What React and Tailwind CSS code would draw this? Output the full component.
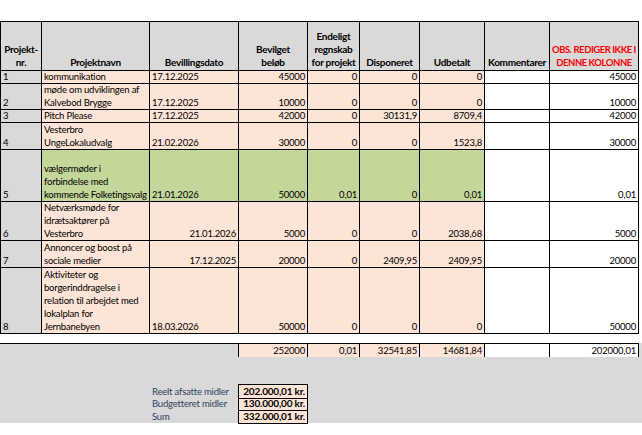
const COLS = "grid-cols-[40px_107px_88px_68px_51px_59px_64px_64px_88px]";

const rows = [
  { nr: "1", name: ["kommunikation"], date: "17.12.2025", bev: "45000", end: "0", disp: "0", udb: "0", obs: "45000" },
  { nr: "2", name: ["møde om udviklingen af", "Kalvebod Brygge"], date: "17.12.2025", bev: "10000", end: "0", disp: "0", udb: "0", obs: "10000" },
  { nr: "3", name: ["Pitch Please"], date: "17.12.2025", bev: "42000", end: "0", disp: "30131,9", udb: "8709,4", obs: "42000" },
  { nr: "4", name: ["Vesterbro", "UngeLokaludvalg"], date: "21.02.2026", bev: "30000", end: "0", disp: "0", udb: "1523,8", obs: "30000" },
  { nr: "5", name: ["vælgermøder i", "forbindelse med", "kommende Folketingsvalg"], date: "21.01.2026", bev: "50000", end: "0,01", disp: "0", udb: "0,01", obs: "0,01", green: true },
  { nr: "6", name: ["Netværksmøde for", "idrætsaktører på", "Vesterbro"], date: "21.01.2026", dateRight: true, bev: "5000", end: "0", disp: "0", udb: "2038,68", obs: "5000" },
  { nr: "7", name: ["Annoncer og boost på", "sociale medier"], date: "17.12.2025", dateRight: true, bev: "20000", end: "0", disp: "2409,95", udb: "2409,95", obs: "20000" },
  { nr: "8", name: ["Aktiviteter og", "borgerinddragelse i", "relation til arbejdet med", "lokalplan for", "Jernbanebyen"], date: "18.03.2026", bev: "50000", end: "0", disp: "0", udb: "0", obs: "50000" },
];

const Cell = ({ bg, right, center, children, className = "" }) => (
  <div
    className={`flex flex-col justify-end px-[2px] leading-[13px] whitespace-nowrap ${bg} ${
      right ? "text-right" : center ? "text-center" : "text-left"
    } ${className}`}
  >
    {children}
  </div>
);

const Head = ({ children, className = "text-[10px] tracking-[-0.3px]" }) => (
  <Cell bg="bg-[#d9d9d9]" center className={`font-bold pb-[1px] px-0 ${className}`}>
    {children}
  </Cell>
);

export default function App() {
  return (
    <div className="w-[642px] h-[435px] bg-white text-black text-[9.5px] tracking-[-0.2px] font-[Lato,'Liberation_Sans',sans-serif] overflow-hidden">
      {/* Main table */}
      <div
        className={`mt-[21px] grid ${COLS} grid-rows-[48px_12px_25px_12px_26px_51px_38px_26px_65px] gap-px p-px bg-black w-[639px]`}
      >
        {/* Header */}
        <Head>
          <div>Projekt-</div>
          <div>nr.</div>
        </Head>
        <Head>Projektnavn</Head>
        <Head>Bevillingsdato</Head>
        <Head>
          <div>Bevilget</div>
          <div>beløb</div>
        </Head>
        <Head>
          <div>Endeligt</div>
          <div>regnskab</div>
          <div>for projekt</div>
        </Head>
        <Head>Disponeret</Head>
        <Head>Udbetalt</Head>
        <Head>Kommentarer</Head>
        <Head className="text-[#ff0000] text-[9.5px] tracking-[-0.45px]">
          <div>OBS. REDIGER IKKE I</div>
          <div>DENNE KOLONNE</div>
        </Head>

        {/* Data rows */}
        {rows.map((r) => {
          const fill = r.green ? "bg-[#c4d79b]" : "bg-[#fce4d6]";
          return [
            <Cell key={r.nr + "a"} bg="bg-[#d9d9d9]">{r.nr}</Cell>,
            <Cell key={r.nr + "b"} bg={fill}>
              {r.name.map((line) => (
                <div key={line}>{line}</div>
              ))}
            </Cell>,
            <Cell key={r.nr + "c"} bg={fill} right={r.dateRight}>{r.date}</Cell>,
            <Cell key={r.nr + "d"} bg={fill} right>{r.bev}</Cell>,
            <Cell key={r.nr + "e"} bg={fill} right>{r.end}</Cell>,
            <Cell key={r.nr + "f"} bg={fill} right>{r.disp}</Cell>,
            <Cell key={r.nr + "g"} bg={fill} right>{r.udb}</Cell>,
            <Cell key={r.nr + "h"} bg="bg-white" />,
            <Cell key={r.nr + "i"} bg="bg-white" right>{r.obs}</Cell>,
          ];
        })}
      </div>

      {/* Totals and summary */}
      <div className="mt-[9px] bg-[#d9d9d9] h-[80px]">
        <div className="h-px w-[639px] bg-black" />
        <div className="flex">
          <div className="w-[238px]" />
          <div className="grid grid-cols-[68px_51px_59px_64px_64px_88px] h-[13px] gap-px px-px pb-px bg-black">
            <Cell bg="bg-[#fce4d6]" right>252000</Cell>
            <Cell bg="bg-[#fce4d6]" right>0,01</Cell>
            <Cell bg="bg-[#fce4d6]" right>32541,85</Cell>
            <Cell bg="bg-[#fce4d6]" right>14681,84</Cell>
            <Cell bg="bg-white" />
            <Cell bg="bg-white" right>202000,01</Cell>
          </div>
        </div>

        <div className="mt-[27px] flex">
          <div className="w-[151px]" />
          <div className="w-[87px] grid grid-rows-[13px_11px_12px] gap-px p-px text-[#333f5c]">
            <div className="flex items-end leading-[12px]">Reelt afsatte midler</div>
            <div className="flex items-end leading-[12px]">Budgetteret midler</div>
            <div className="flex items-end leading-[12px]">Sum</div>
          </div>
          <div className="w-[70px] grid grid-rows-[13px_11px_12px] gap-px p-px bg-black font-bold text-[10px] tracking-[-0.2px]">
            <Cell bg="bg-[#fce4d6]" right className="leading-[12px]">202.000,01 kr.</Cell>
            <Cell bg="bg-[#fce4d6]" right className="leading-[12px]">130.000,00 kr.</Cell>
            <Cell bg="bg-[#fce4d6]" right className="leading-[12px]">332.000,01 kr.</Cell>
          </div>
        </div>
      </div>
    </div>
  );
}
